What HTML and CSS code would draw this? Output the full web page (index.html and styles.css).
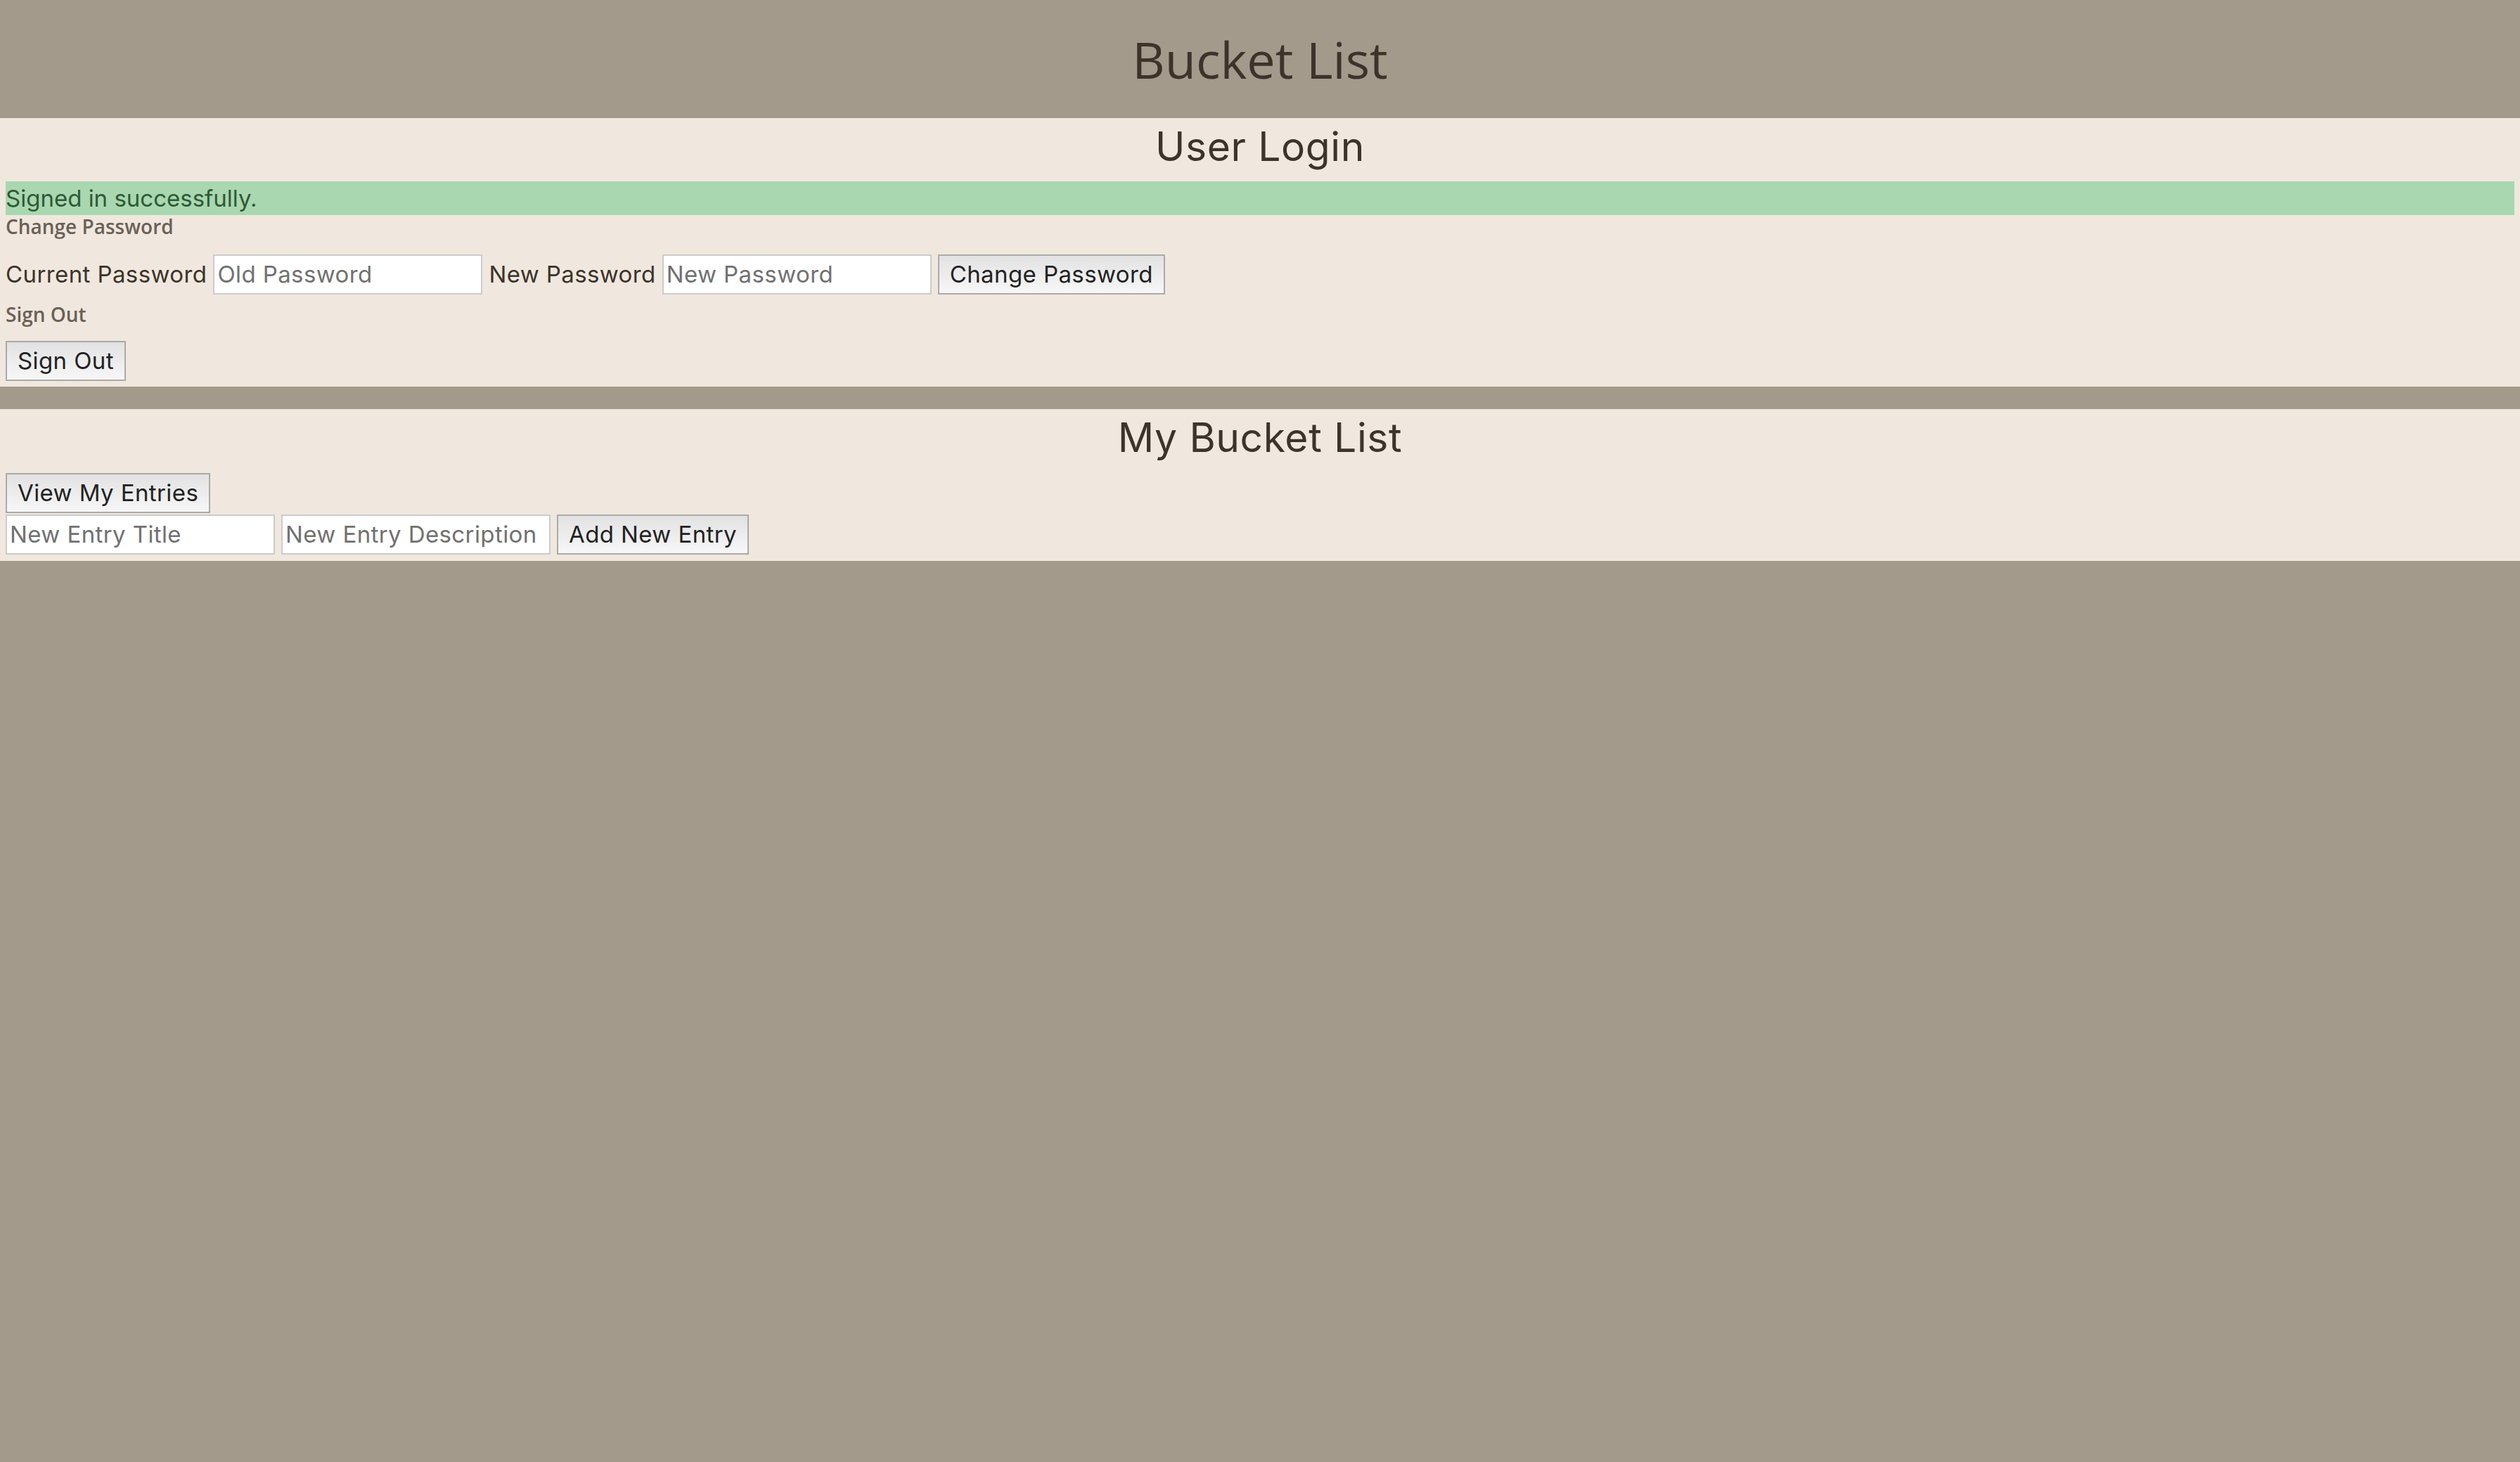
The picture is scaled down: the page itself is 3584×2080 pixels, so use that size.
FILE: index.html
```html
<!DOCTYPE html>
<html lang="en">
<head>
<meta charset="utf-8">
<title>Bucket List</title>
<link rel="stylesheet" href="styles.css">
</head>
<body>
<header class="site-header">
  <h1 class="site-title">Bucket List</h1>
</header>
<main>
  <section class="panel">
    <h2 class="panel-title">User Login</h2>
    <div class="flash">Signed in successfully.</div>
    <h4 class="sub-label sub-label--first">Change Password</h4>
    <div class="row">
      <span class="field-label">Current Password</span>
      <input class="text-input" type="password" placeholder="Old Password">
      <span class="field-label">New Password</span>
      <input class="text-input" type="password" placeholder="New Password">
      <button class="btn" type="button">Change Password</button>
    </div>
    <h4 class="sub-label sub-label--second">Sign Out</h4>
    <div class="row">
      <button class="btn" type="button">Sign Out</button>
    </div>
  </section>
  <section class="panel panel--list">
    <h2 class="panel-title">My Bucket List</h2>
    <div class="row">
      <button class="btn" type="button">View My Entries</button>
    </div>
    <div class="row row--entry">
      <input class="text-input" type="text" placeholder="New Entry Title">
      <input class="text-input" type="text" placeholder="New Entry Description">
      <button class="btn btn--add" type="button">Add New Entry</button>
    </div>
  </section>
</main>
</body>
</html>
```
FILE: styles.css
```css
html, body {
  margin: 0;
  padding: 0;
}

body {
  background: #a39a8c;
  font-family: "Inter", "Liberation Sans", sans-serif;
  color: #3c332b;
  min-height: 2080px;
}

.site-header {
  height: 168px;
  display: flex;
  align-items: center;
  justify-content: center;
}

.site-title {
  margin: 0;
  font-family: "Open Sans", "Liberation Sans", sans-serif;
  font-weight: 500;
  font-size: 72px;
  line-height: 72px;
  color: #3c332b;
}

.panel {
  background: #f0e8de;
  padding: 0 8px 8px;
}

.panel--list {
  margin-top: 32px;
  padding-bottom: 9px;
}

.panel-title {
  margin: 0;
  text-align: center;
  font-weight: 400;
  font-size: 57px;
  letter-spacing: 0.6px;
  line-height: 82px;
  padding-bottom: 8px;
  color: #3c332b;
}

.flash {
  background: #a9d7b0;
  color: #2e5a34;
  font-size: 33px;
  line-height: 48px;
  height: 48px;
}

.sub-label {
  margin: 0;
  font-family: "Open Sans", "Liberation Sans", sans-serif;
  font-weight: 600;
  font-size: 28px;
  line-height: 32px;
  color: #6b6057;
}

.sub-label--first {
  margin-bottom: 23px;
}

.sub-label--second {
  margin-top: 12px;
  margin-bottom: 21px;
}

.row {
  display: flex;
  align-items: center;
  gap: 9px;
  height: 58px;
}

.row--entry {
  margin-top: 1px;
}

.field-label {
  font-size: 33px;
  letter-spacing: 0.4px;
  color: #3c332b;
  white-space: nowrap;
}

.text-input {
  box-sizing: border-box;
  width: 383px;
  height: 57px;
  margin: 0;
  padding: 0 4px;
  border: 2px solid #cbcbcb;
  background: #ffffff;
  font-family: "Inter", "Liberation Sans", sans-serif;
  font-size: 33px;
  letter-spacing: 0.4px;
  color: #222;
  outline: none;
}

.text-input::placeholder {
  color: #717171;
  opacity: 1;
}

.btn {
  box-sizing: border-box;
  height: 57px;
  margin: 0;
  padding: 0 15px;
  border: 2px solid #aaaaaa;
  border-radius: 0;
  background: linear-gradient(to bottom, #e2e2e2, #f7f7f7);
  font-family: "Inter", "Liberation Sans", sans-serif;
  font-size: 33px;
  letter-spacing: 0.4px;
  color: #222;
  white-space: nowrap;
}
```
